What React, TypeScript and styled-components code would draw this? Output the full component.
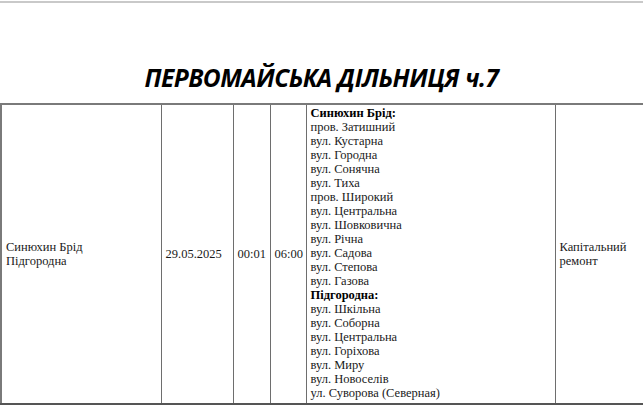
import React from "react";
import styled, { createGlobalStyle } from "styled-components";

const Global = createGlobalStyle`
  html, body { margin: 0; padding: 0; background: #fff; overflow: hidden; }
  body { width: 643px; height: 405px; }
`;

const Page = styled.div`
  width: 643px;
  height: 405px;
  display: flex;
  flex-direction: column;
  background: #fff;
`;

const TopRule = styled.div`
  flex-shrink: 0;
  height: 2px;
  margin-top: 1px;
  background: #c9c9c9;
`;

const TitleArea = styled.div`
  flex-shrink: 0;
  height: 100px;
  display: flex;
  align-items: flex-end;
  justify-content: center;
  box-sizing: border-box;
`;

const Title = styled.h1`
  margin: 0 0 10px 0;
  font-family: "Open Sans", "Noto Sans", sans-serif;
  font-weight: 700;
  font-style: italic;
  font-size: 24.5px;
  letter-spacing: -0.5px;
  line-height: 30px;
  color: #000;
`;

const Table = styled.table`
  flex-shrink: 0;
  border-collapse: collapse;
  width: 647px;
  table-layout: fixed;
  font-family: "Liberation Serif", "Times New Roman", serif;
  font-size: 12.5px;
  line-height: 14px;
  color: #1a1a1a;
`;

const Row = styled.tr`
  height: 300px;
`;

const Cell = styled.td<{ $w: number; $top?: boolean }>`
  width: ${(p) => p.$w}px;
  border: 1px solid #6e6e6e;
  border-top: 2px solid #7a7a7a;
  border-bottom: 2px solid #555;
  padding: ${(p) => (p.$top ? "1px 4px 0 4px" : "0 4px")};
  vertical-align: ${(p) => (p.$top ? "top" : "middle")};
  box-sizing: border-box;
  &:first-child { border-left: 2px solid #7a7a7a; }
`;

const Heading = styled.div`
  font-weight: 700;
  color: #000;
`;

const Line = styled.div``;

const streetsA = [
  "пров. Затишний",
  "вул. Кустарна",
  "вул. Городна",
  "вул. Сонячна",
  "вул. Тиха",
  "пров. Широкий",
  "вул. Центральна",
  "вул. Шовковична",
  "вул. Річна",
  "вул. Садова",
  "вул. Степова",
  "вул. Газова",
];

const streetsB = [
  "вул. Шкільна",
  "вул. Соборна",
  "вул. Центральна",
  "вул. Горіхова",
  "вул. Миру",
  "вул. Новоселів",
  "ул. Суворова (Северная)",
];

export default function App() {
  return (
    <Page>
      <Global />
      <TopRule />
      <TitleArea>
        <Title>ПЕРВОМАЙСЬКА ДІЛЬНИЦЯ ч.7</Title>
      </TitleArea>
      <Table>
        <tbody>
          <Row>
            <Cell $w={160}>
              <Line>Синюхин Брід</Line>
              <Line>Підгородна</Line>
            </Cell>
            <Cell $w={72}>29.05.2025</Cell>
            <Cell $w={37}>00:01</Cell>
            <Cell $w={36}>06:00</Cell>
            <Cell $w={249} $top>
              <Heading>Синюхин Брід:</Heading>
              {streetsA.map((s, i) => (
                <Line key={"a" + i}>{s}</Line>
              ))}
              <Heading>Підгородна:</Heading>
              {streetsB.map((s, i) => (
                <Line key={"b" + i}>{s}</Line>
              ))}
            </Cell>
            <Cell $w={93}>
              <Line>Капітальний</Line>
              <Line>ремонт</Line>
            </Cell>
          </Row>
        </tbody>
      </Table>
    </Page>
  );
}
